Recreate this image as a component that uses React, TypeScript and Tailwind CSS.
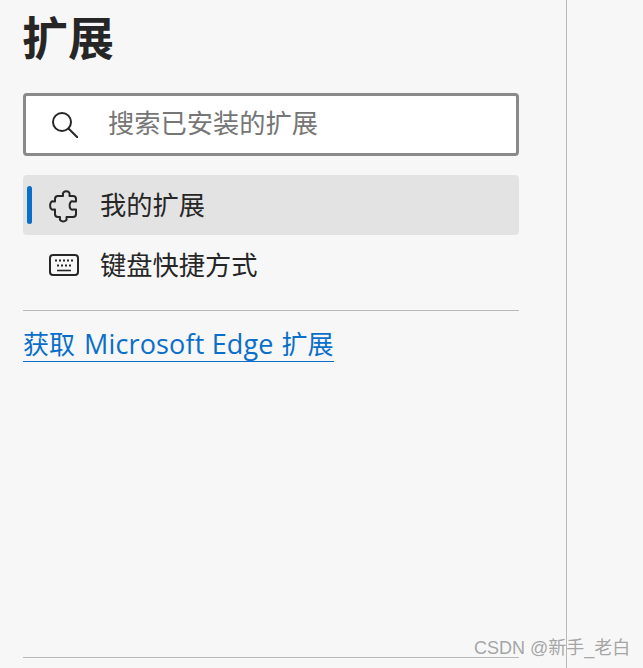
import React from "react";

const cjk = "font-['Noto_Sans_CJK_SC','Noto_Sans',sans-serif]";

function SearchIcon() {
    return (
        <svg width="26" height="26" viewBox="0 0 26 26" fill="none" stroke="#262626" strokeWidth="2">
            <circle cx="10" cy="10" r="9" />
            <path d="M16.5 16.5 L25.5 25.5" strokeLinecap="round" />
        </svg>
    );
}

function PuzzleIcon() {
    return (
        <svg width="36" height="36" viewBox="0 0 36 36" fill="none" stroke="#262626" strokeWidth="2" strokeLinejoin="round">
            <path d="M12 9 H17 V8 C15.5 3 25 3 23.5 8 V9 H27 C28.8 9 30 10.2 30 12 V14.5 H27 C22.5 13 22.5 24 27 22.5 H30 V27 C30 28.8 28.8 30 27 30 H20.5 V31 C22 35.5 12.5 35.5 14 31 V30 H12 C10.2 30 9 28.8 9 27 V22.5 H7.5 C3 24 3 13 7.5 14.5 H9 V12 C9 10.2 10.2 9 12 9 Z" />
        </svg>
    );
}

function KeyboardIcon() {
    return (
        <svg width="30" height="22" viewBox="0 0 30 22" fill="none" stroke="#262626" strokeWidth="2">
            <rect x="1" y="1" width="28" height="20" rx="3" />
            <path d="M8 16.5 H22" strokeWidth="1.6" />
            <g fill="#262626" stroke="none">
                {[6, 10, 14, 18, 22].map(x => <rect key={x} x={x} y="5.5" width="2" height="2" />)}
                {[8, 12, 16, 20].map(x => <rect key={x} x={x} y="10.5" width="2" height="2" />)}
            </g>
        </svg>
    );
}

export default function App() {
    return (
        <div className={`relative h-[668px] w-[643px] overflow-hidden bg-[#f7f7f7] text-[#262626] ${cjk}`}>
            <div className="flex h-full w-[567px] flex-col border-r border-[#b9b9b9] pl-[23px]">
                {/* Header */}
                <h1 className="-ml-[1px] flex h-[69px] items-center text-[46px] leading-none font-bold">扩展</h1>

                {/* Search */}
                <div className="mt-[24px] flex h-[63px] w-[496px] items-center rounded-[4px] border-[3px] border-[#8a8a8a] bg-white pl-[26px]">
                    <SearchIcon />
                    <span className="ml-[30px] pb-[4px] text-[26.25px] leading-none text-[#767676]">搜索已安装的扩展</span>
                </div>

                {/* Menu */}
                <div className="mt-[19px] w-[496px]">
                    <div className="relative flex h-[60px] items-center rounded-[4px] bg-[#e3e3e3] pl-[23px]">
                        <span className="absolute top-[11px] left-[4px] h-[38px] w-[5px] rounded-full bg-[#0a6fc9]"></span>
                        <span className="flex w-[54px]"><PuzzleIcon /></span>
                        <span className="pb-[2px] text-[26.25px] leading-none">我的扩展</span>
                    </div>
                    <div className="flex h-[60px] items-center pl-[26px]">
                        <span className="flex w-[51px]"><KeyboardIcon /></span>
                        <span className="pb-[2px] text-[26.25px] leading-none">键盘快捷方式</span>
                    </div>
                </div>

                <div className="mt-[15px] h-px w-[496px] bg-[#b9b9b9]"></div>

                {/* Link */}
                <div className="mt-[15px] flex">
                    <a className="border-b border-[#0a6fc9] pb-[1px] text-[26px] leading-[33px] whitespace-nowrap text-[#0a6fc9]">
                        获取
                        <span className="mr-[8px] ml-[9px] font-['Open_Sans',sans-serif] text-[27px] tracking-[0.15px]">Microsoft Edge</span>
                        扩展
                    </a>
                </div>

                <div className="mt-auto mb-[10px] h-px w-[496px] bg-[#b9b9b9]"></div>
            </div>

            {/* Watermark */}
            <span className="absolute top-[637px] left-[474px] font-['Liberation_Sans','Noto_Sans_CJK_SC',sans-serif] text-[18px] leading-[22px] whitespace-nowrap text-[#8f8f8f]/80">
                CSDN @新手_老白
            </span>
        </div>
    );
}
